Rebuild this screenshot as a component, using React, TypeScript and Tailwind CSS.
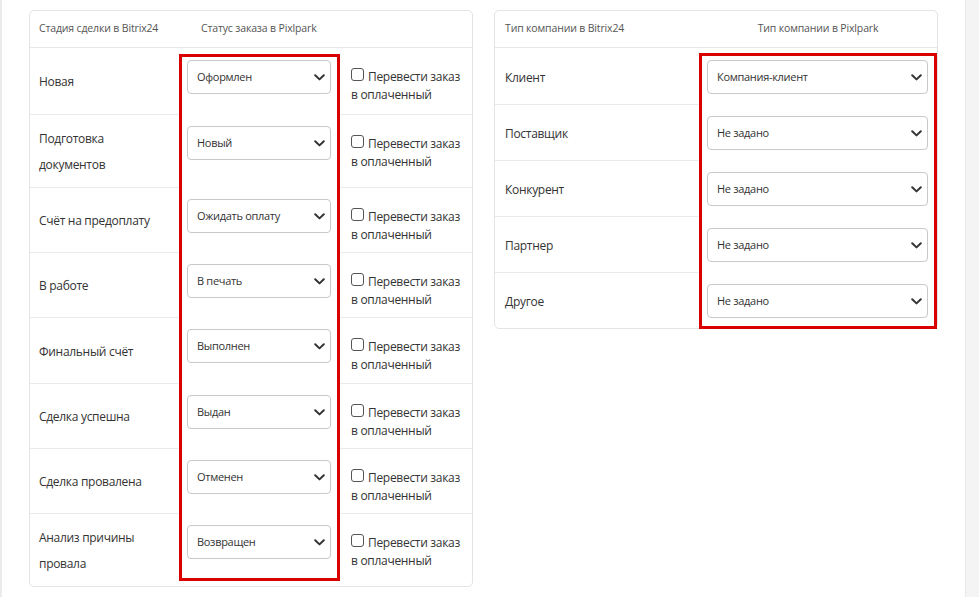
import React from "react";

const stages = [
  { label: "Новая", value: "Оформлен", h: "h-[66px]" },
  { label: "Подготовка\nдокументов", value: "Новый", h: "h-[73px]" },
  { label: "Счёт на предоплату", value: "Ожидать оплату", h: "h-[65px]" },
  { label: "В работе", value: "В печать", h: "h-[65px]" },
  { label: "Финальный счёт", value: "Выполнен", h: "h-[66px]" },
  { label: "Сделка успешна", value: "Выдан", h: "h-[65px]" },
  { label: "Сделка провалена", value: "Отменен", h: "h-[65px]" },
  { label: "Анализ причины\nпровала", value: "Возвращен", h: "h-[73px]" },
];

const types = [
  { label: "Клиент", value: "Компания-клиент" },
  { label: "Поставщик", value: "Не задано" },
  { label: "Конкурент", value: "Не задано" },
  { label: "Партнер", value: "Не задано" },
  { label: "Другое", value: "Не задано" },
];

function Chevron() {
  return (
    <svg width="11" height="7" viewBox="0 0 11 7" className="shrink-0">
      <path d="M1.2 1.2 L5.5 5.4 L9.8 1.2" fill="none" stroke="#333" strokeWidth="2" strokeLinecap="round" strokeLinejoin="round" />
    </svg>
  );
}

function Select({ value, w }: { value: string; w: string }) {
  return (
    <div className={`${w} h-[34px] flex items-center justify-between border border-[#c9c9c9] rounded-[4px] bg-white pl-[9px] pr-[5px] text-[11px] tracking-[-0.3px] text-[#333]`}>
      <span>{value}</span>
      <Chevron />
    </div>
  );
}

export default function App() {
  return (
    <div className="flex w-full h-[597px] bg-white text-[#333]" style={{ fontFamily: '"Open Sans", "Noto Sans", sans-serif' }}>
      <div className="w-[2px] bg-[#ebebeb]" />
      <div className="flex-1 flex items-start gap-[21px] pl-[27px] pt-[10px]">
        {/* Left card */}
        <div className="w-[444px] border border-[#e4e4e4] rounded-[5px] bg-white">
          <div className="grid grid-cols-[149px_161px_1fr] h-[37px] border-b border-[#e8e8e8] items-center text-[10.5px] tracking-[-0.15px] text-[#555]">
            <div className="pl-[9px] whitespace-nowrap">Стадия сделки в Bitrix24</div>
            <div className="pl-[22px] whitespace-nowrap">Статус заказа в Pixlpark</div>
            <div />
          </div>
          <div className="relative">
            {stages.map((s, i) => (
              <div key={i} className={`grid grid-cols-[149px_161px_1fr] grid-rows-[100%] ${s.h}`}>
                <div className={`flex items-center pl-[9px] pt-[2px] text-[12px] tracking-[-0.3px] leading-[26px] whitespace-pre-line ${i > 0 ? "border-t border-[#ebebeb]" : ""}`}>
                  {s.label}
                </div>
                <div className="pt-[12px] pl-[8px]">
                  <Select value={s.value} w="w-[144px]" />
                </div>
                <div className={`pl-[11px] pt-[20px] text-[12px] tracking-[-0.3px] leading-[18px] whitespace-nowrap overflow-hidden ${i > 0 ? "border-t border-[#ebebeb]" : ""}`}>
                  <span className="inline-block w-[13px] h-[13px] border border-[#555] rounded-[3px] mr-[4px] bg-white" />
                  Перевести заказ
                  <br />в оплаченный
                </div>
              </div>
            ))}
            <div className="absolute left-[149px] top-[6px] bottom-[5px] w-[161px] border-[3px] border-[#d90000] pointer-events-none" />
          </div>
        </div>

        {/* Right card */}
        <div className="w-[444px] border border-[#e4e4e4] rounded-[5px] bg-white">
          <div className="grid grid-cols-[204px_1fr] h-[37px] border-b border-[#e8e8e8] items-center text-[10.5px] tracking-[-0.15px] text-[#555]">
            <div className="pl-[10px] whitespace-nowrap">Тип компании в Bitrix24</div>
            <div className="text-center whitespace-nowrap">Тип компании в Pixlpark</div>
          </div>
          <div className="relative">
            {types.map((t, i) => (
              <div key={i} className="grid grid-cols-[204px_1fr] grid-rows-[100%] h-[56px]">
                <div className={`flex items-center pl-[10px] pt-[3px] text-[12px] tracking-[-0.3px] leading-[26px] ${i > 0 ? "border-t border-[#ebebeb]" : ""}`}>
                  {t.label}
                </div>
                <div className="pt-[12px] pl-[8px]">
                  <Select value={t.value} w="w-[221px]" />
                </div>
              </div>
            ))}
            <div className="absolute left-[204px] top-[5px] bottom-[-1px] right-0 border-[3px] border-[#d90000] pointer-events-none" />
          </div>
        </div>
      </div>
      <div className="w-[14px] bg-[#f4f4f4] border-l border-[#e9e9e9]" />
    </div>
  );
}
